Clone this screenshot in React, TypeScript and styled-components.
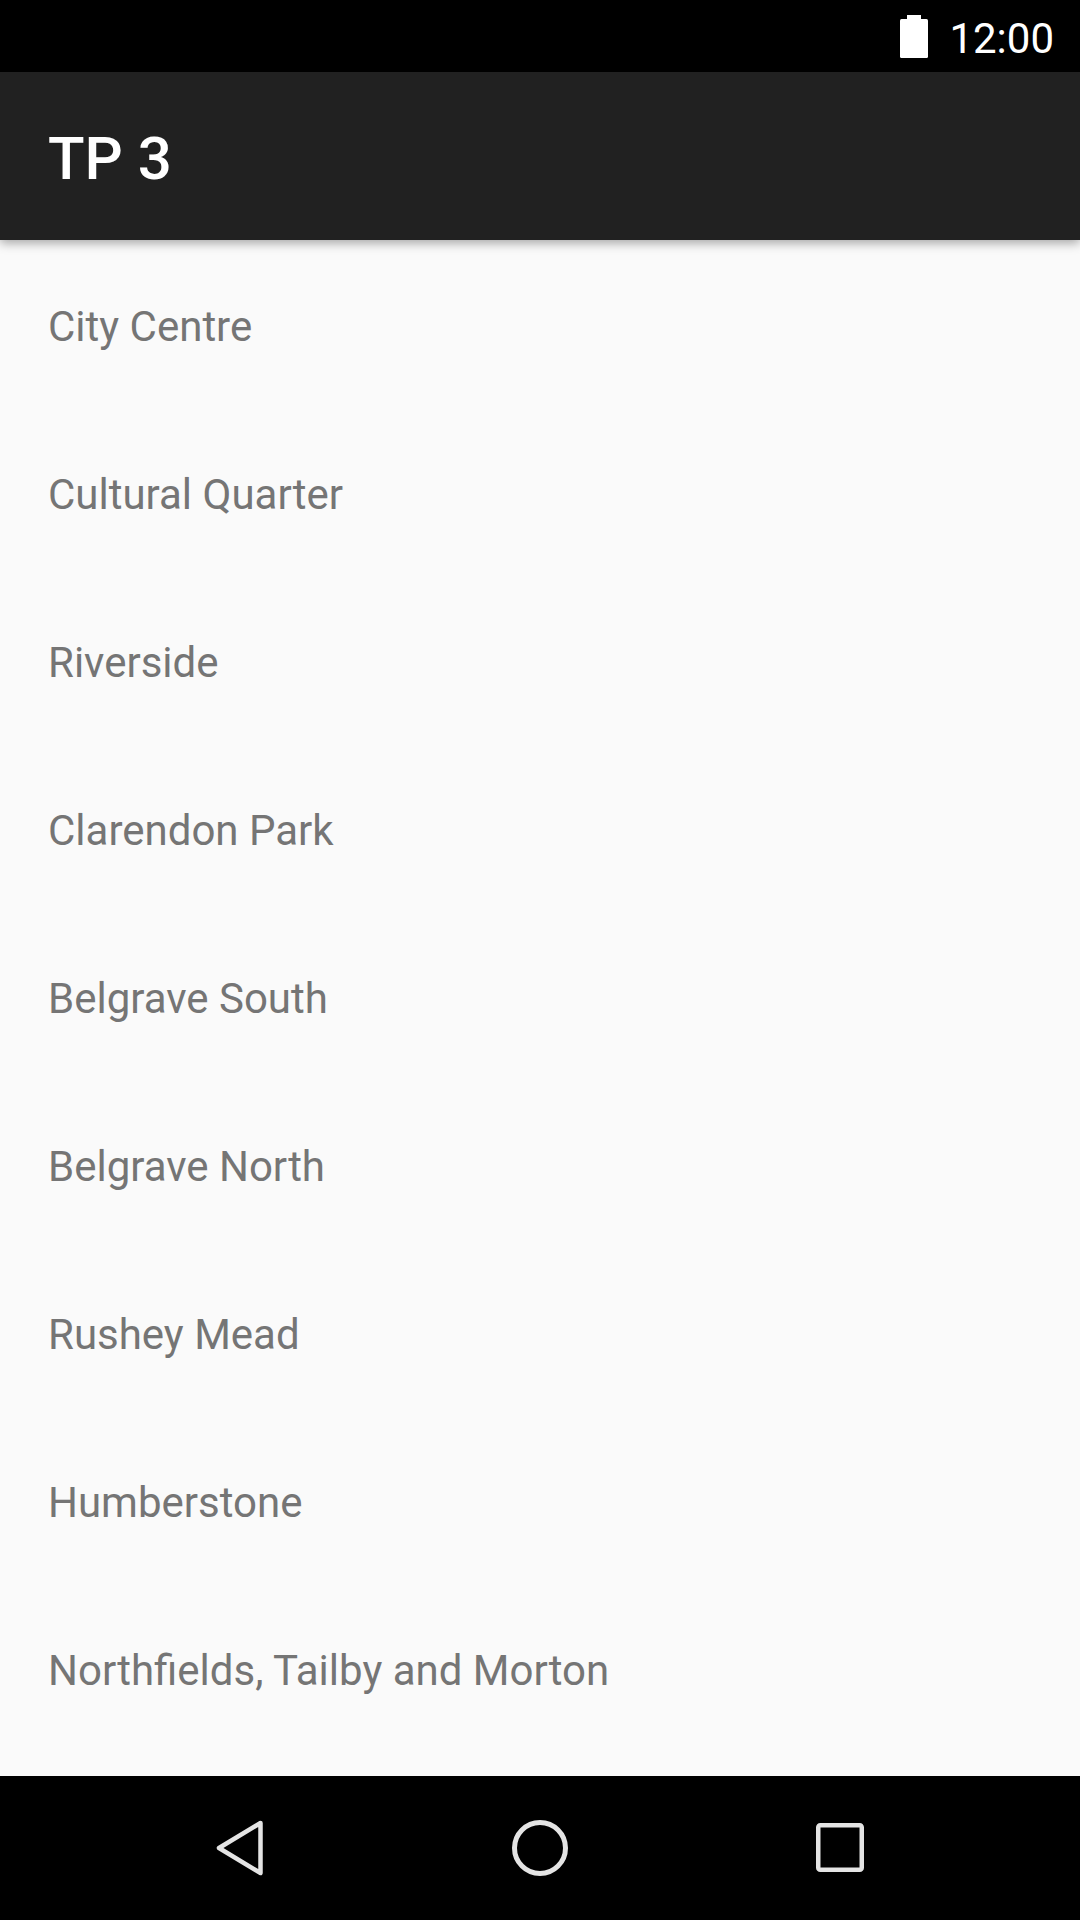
import React from "react";
import styled, { createGlobalStyle } from "styled-components";

const GlobalStyle = createGlobalStyle`
  html, body {
    margin: 0;
    padding: 0;
    background: #fafafa;
  }
  * { box-sizing: border-box; }
`;

const Screen = styled.div`
  width: 1080px;
  height: 1920px;
  display: flex;
  flex-direction: column;
  background: #fafafa;
  font-family: Roboto, "Noto Sans", "Liberation Sans", sans-serif;
  overflow: hidden;
`;

const StatusBar = styled.div`
  height: 72px;
  flex: none;
  background: #000;
  display: flex;
  align-items: center;
  justify-content: flex-end;
  padding-right: 26px;
  gap: 21px;
`;

const Time = styled.span`
  color: #fff;
  font-size: 42px;
  font-weight: 400;
  line-height: 1;
  padding-top: 6px;
`;

const AppBar = styled.header`
  height: 168px;
  flex: none;
  background: #212121;
  display: flex;
  align-items: center;
  padding-left: 48px;
  position: relative;
  z-index: 2;
  box-shadow: 0 3px 10px rgba(0, 0, 0, 0.35);
`;

const Title = styled.h1`
  margin: 0;
  padding-top: 5px;
  color: #fff;
  font-size: 60px;
  font-weight: 500;
  line-height: 1;
`;

const List = styled.ul`
  flex: 1;
  margin: 0;
  padding: 0;
  list-style: none;
`;

const Row = styled.li`
  height: 168px;
  display: flex;
  align-items: center;
  padding-left: 48px;
  padding-top: 5px;
  color: #757575;
  font-size: 42px;
  font-weight: 400;
  line-height: 1;
`;

const NavBar = styled.nav`
  height: 144px;
  flex: none;
  background: #000;
  display: flex;
  justify-content: center;
  align-items: center;
`;

const NavSlot = styled.div`
  width: 300px;
  height: 100%;
  display: flex;
  align-items: center;
  justify-content: center;
`;

const Battery = () => (
  <svg width="28" height="43" viewBox="0 0 28 43">
    <rect x="7" y="0" width="14" height="5" fill="#fff" />
    <rect x="0" y="4" width="28" height="39" rx="1.5" fill="#fff" />
  </svg>
);

const stroke = "#e4e4e4";

const BackIcon = () => (
  <svg width="60" height="60" viewBox="0 0 60 60">
    <path
      d="M50.5 5 L9 30 L50.5 55 Z"
      fill="none"
      stroke={stroke}
      strokeWidth="4.5"
      strokeLinejoin="round"
    />
  </svg>
);

const HomeIcon = () => (
  <svg width="60" height="60" viewBox="0 0 60 60">
    <circle cx="30" cy="30" r="25.5" fill="none" stroke={stroke} strokeWidth="5" />
  </svg>
);

const RecentsIcon = () => (
  <svg width="60" height="60" viewBox="0 0 60 60">
    <rect
      x="8.25"
      y="7.25"
      width="43.5"
      height="44.5"
      rx="2"
      fill="none"
      stroke={stroke}
      strokeWidth="4.5"
    />
  </svg>
);

const places = [
  "City Centre",
  "Cultural Quarter",
  "Riverside",
  "Clarendon Park",
  "Belgrave South",
  "Belgrave North",
  "Rushey Mead",
  "Humberstone",
  "Northfields, Tailby and Morton",
];

export default function App() {
  return (
    <>
      <GlobalStyle />
      <Screen>
        <StatusBar>
          <Battery />
          <Time>12:00</Time>
        </StatusBar>
        <AppBar>
          <Title>TP 3</Title>
        </AppBar>
        <List>
          {places.map((p) => (
            <Row key={p}>{p}</Row>
          ))}
        </List>
        <NavBar>
          <NavSlot>
            <BackIcon />
          </NavSlot>
          <NavSlot>
            <HomeIcon />
          </NavSlot>
          <NavSlot>
            <RecentsIcon />
          </NavSlot>
        </NavBar>
      </Screen>
    </>
  );
}
